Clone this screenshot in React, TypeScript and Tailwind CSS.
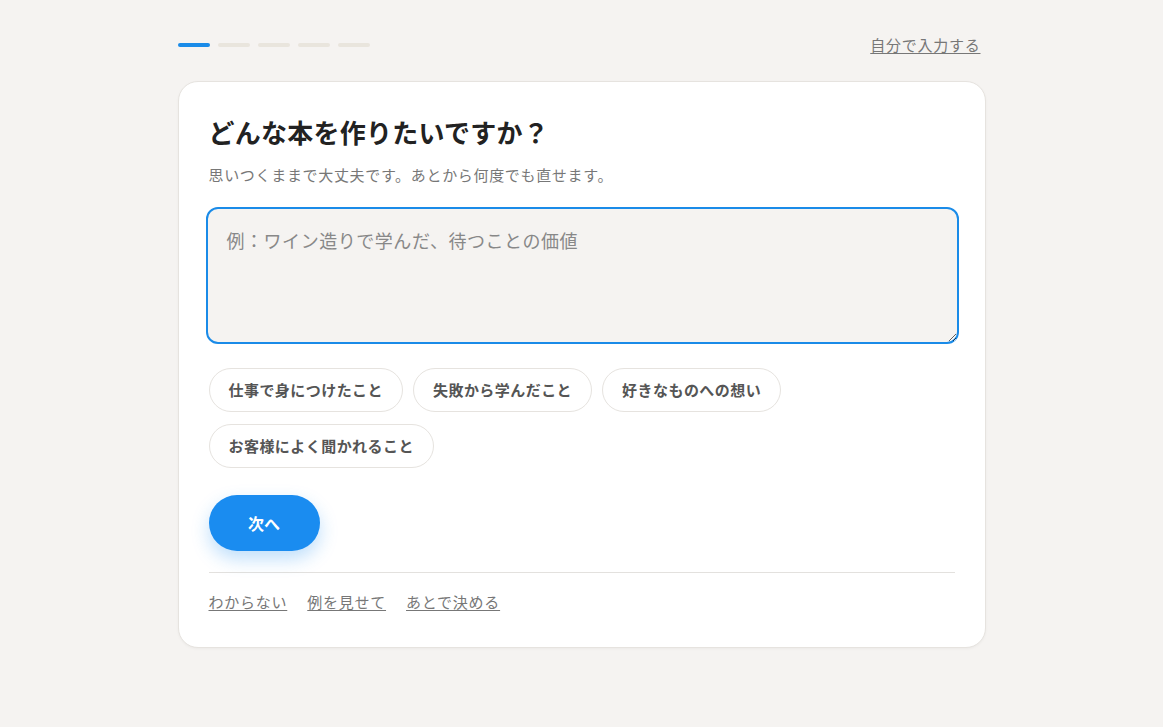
const suggestions = [
  "仕事で身につけたこと",
  "失敗から学んだこと",
  "好きなものへの想い",
  "お客様によく聞かれること",
];

const footerLinks = ["わからない", "例を見せて", "あとで決める"];

export default function App() {
  return (
    <div
      className="min-h-screen bg-[#f5f3f1] text-[#222]"
      style={{ fontFamily: '"Noto Sans CJK JP", "Noto Sans", sans-serif' }}
    >
      <div className="w-[808px] mx-auto pt-[35px]">
        <div className="flex items-center justify-between h-5">
          <div className="flex gap-2">
            {Array.from({ length: 5 }).map((_, i) => (
              <div
                key={i}
                className={`h-1 w-8 rounded-full ${i === 0 ? "bg-[#1a8be8]" : "bg-[#e9e5dd]"}`}
              />
            ))}
          </div>
          <a href="#" className="text-[15px] leading-5 text-[#777] underline underline-offset-2 tracking-[0.05em] pr-[5px]">
            自分で入力する
          </a>
        </div>

        <div className="mt-[26px] bg-white border border-[#e6e3df] rounded-[20px] shadow-[0_1px_3px_rgba(0,0,0,0.04)] px-[30px] pt-[30px] pb-[33px]">
          <h1 className="text-[26px] leading-[39px] font-bold tracking-[0.01em]">
            どんな本を作りたいですか？
          </h1>
          <p className="mt-3 text-[15px] leading-6 text-[#777] tracking-[0.045em]">
            思いつくままで大丈夫です。あとから何度でも直せます。
          </p>

          <textarea
            className="mt-5 block w-[calc(100%+7px)] -ml-[3px] h-[137px] rounded-xl border-2 border-[#1a8be8] bg-[#f5f3f1] px-[19px] py-[17px] text-[18px] leading-[29px] tracking-[0.03em] text-[#333] placeholder:text-[#888] outline-none"
            placeholder="例：ワイン造りで学んだ、待つことの価値"
          />

          <div className="mt-6 flex flex-wrap gap-x-[10px] gap-y-3">
            {suggestions.map((s) => (
              <button
                key={s}
                className="h-11 px-[19px] rounded-full border border-[#e6e3df] bg-white text-[15px] font-bold text-[#555] tracking-[0.03em]"
              >
                {s}
              </button>
            ))}
          </div>

          <button className="mt-[27px] h-14 w-[111px] rounded-full bg-[#1a8cf0] text-white text-[16px] font-bold shadow-[0_8px_18px_rgba(26,140,240,0.28)]">
            次へ
          </button>

          <div className="mt-[21px] border-t border-[#e3e1de]" />

          <div className="mt-[17px] flex gap-5">
            {footerLinks.map((l) => (
              <a
                key={l}
                href="#"
                className="text-[15px] leading-6 text-[#777] underline underline-offset-2 tracking-[0.05em]"
              >
                {l}
              </a>
            ))}
          </div>
        </div>
      </div>
    </div>
  );
}
